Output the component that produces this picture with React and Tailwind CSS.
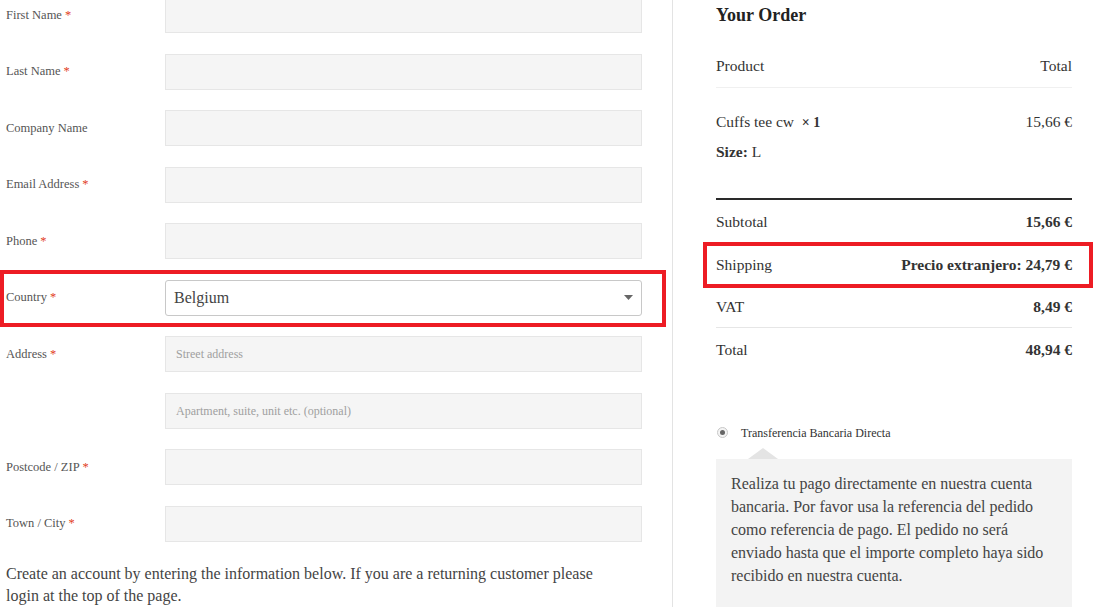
import React from 'react';

const fields = [
    { label: 'First Name', req: true },
    { label: 'Last Name', req: true },
    { label: 'Company Name' },
    { label: 'Email Address', req: true },
    { label: 'Phone', req: true },
    { label: 'Country', req: true, select: true },
    { label: 'Address', req: true, placeholder: 'Street address' },
    { label: '', placeholder: 'Apartment, suite, unit etc. (optional)' },
    { label: 'Postcode / ZIP', req: true },
    { label: 'Town / City', req: true },
];

const serif = { fontFamily: '"Liberation Serif", "DejaVu Serif", serif' };

const FieldRow = ({ field }) => (
    <div className="relative flex items-center h-[36px]">
        <label className="w-[165px] pl-[6px] text-[12.5px] text-[#555]">
            {field.label}
            {field.req && <span className="text-[#e2401c] ml-[3px]">*</span>}
        </label>
        {field.select ? (
            <div className="w-[477px] h-[36px] bg-white border border-[#c8c8c8] rounded-[3px] flex items-center justify-between pl-[8px] pr-[8px]">
                <span className="text-[16px] text-[#444]">Belgium</span>
                <svg width="9" height="5" viewBox="0 0 9 5"><path d="M0 0h9L4.5 5z" fill="#666" /></svg>
            </div>
        ) : (
            <div className="w-[477px] h-[36px] bg-[#f5f5f5] border border-[#e6e6e6] flex items-center pl-[10px]">
                {field.placeholder && <span className="text-[12px] text-[#a0a0a0]">{field.placeholder}</span>}
            </div>
        )}
        {field.select && (
            <div className="absolute left-0 top-[-9.5px] w-[666px] h-[57px] border-[4px] border-[#ed1c24]" />
        )}
    </div>
);

const Row = ({ left, right, className = '', rightClass = 'font-bold' }) => (
    <div className={`flex justify-between items-center ${className}`}>
        <span>{left}</span>
        <span className={rightClass}>{right}</span>
    </div>
);

export default function App() {
    return (
        <div className="flex w-[1100px] h-[607px] overflow-hidden bg-white text-[#333]" style={serif}>
            <div className="w-[673px] shrink-0 border-r border-[#e3e3e3]">
                <div className="flex flex-col gap-y-[20.5px] mt-[-3px]">
                    {fields.map((f, i) => (
                        <FieldRow key={i} field={f} />
                    ))}
                </div>
                <p className="pl-[6px] mt-[21px] w-[615px] text-[16px] leading-[22px] text-[#444]">
                    Create an account by entering the information below. If you are a returning customer please login at the top of the page.
                </p>
            </div>

            <div className="flex-1 pl-[43px]">
                <div className="w-[356px] text-[15.5px]">
                    <h3 className="text-[18px] font-bold text-[#222] mt-[4px] leading-[22px]">Your Order</h3>
                    <Row left="Product" right="Total" rightClass="" className="mt-[28px] pb-[10px] border-b border-[#f0f0f0]" />
                    <div className="pt-[22px] pb-[35px] border-b-2 border-[#2a2a2a]">
                        <Row
                            left={<>Cuffs tee cw&nbsp;&nbsp;<span className="text-[14px] font-bold">× 1</span></>}
                            right="15,66 €"
                            rightClass=""
                        />
                        <div className="mt-[6px]"><span className="font-bold">Size:</span> L</div>
                    </div>
                    <Row left="Subtotal" right="15,66 €" className="h-[42px] mt-[1px]" />
                    <div className="relative">
                        <Row left="Shipping" right="Precio extranjero: 24,79 €" className="h-[44px] border-b border-[#f0f0f0]" />
                        <div className="absolute left-[-13px] top-[-1px] w-[390px] h-[46px] border-[4px] border-[#ed1c24]" />
                    </div>
                    <Row left="VAT" right="8,49 €" className="h-[41px] border-b border-[#e6e6e6]" />
                    <Row left="Total" right="48,94 €" className="h-[43px]" />

                    <div className="mt-[53px] flex items-center pl-[1px]">
                        <span className="w-[11px] h-[11px] rounded-full border border-[#c8c8c8] bg-[#f4f4f4] flex items-center justify-center">
                            <span className="w-[5px] h-[5px] rounded-full bg-[#666]" />
                        </span>
                        <span className="ml-[13px] text-[12px] text-[#333]">Transferencia Bancaria Directa</span>
                    </div>
                    <div className="ml-[32px] mt-[6px] w-0 h-0 border-l-[15px] border-r-[15px] border-b-[11px] border-l-transparent border-r-transparent border-b-[#e4e4e4]" />
                    <div className="bg-[#f3f3f3] pl-[15px] pr-[24px] pt-[13px] pb-[20px] text-[16px] leading-[23px] text-[#444]">
                        Realiza tu pago directamente en nuestra cuenta bancaria. Por favor usa la referencia del pedido como referencia de pago. El pedido no será enviado hasta que el importe completo haya sido recibido en nuestra cuenta.
                    </div>
                </div>
            </div>
        </div>
    );
}
